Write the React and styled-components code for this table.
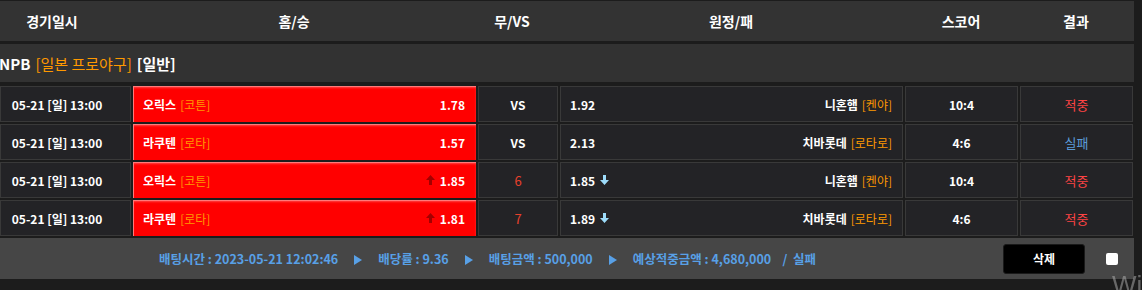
import React from "react";
import styled, { createGlobalStyle } from "styled-components";

const GlobalStyle = createGlobalStyle`
  *, *::before, *::after { box-sizing: border-box; }
  html, body { margin: 0; padding: 0; background: #1c1c1c; overflow: hidden; }
  body { font-family: "Noto Sans CJK KR", "Noto Sans", sans-serif; color: #fff; }
`;

const Page = styled.div`
  width: 1134px;
  padding-top: 1px;
  display: flex;
  flex-direction: column;
`;

const HeaderBar = styled.div`
  height: 40px;
  background: #333333;
  display: grid;
  grid-template-columns: 104px 380px 56px 382px 78px 1fr;
  margin-bottom: 3px;
`;

const HeadCell = styled.div`
  display: flex;
  align-items: center;
  justify-content: center;
  font-size: 14px;
  font-weight: 700;
  color: #fff;
  padding-left: ${(p) => p.$shift || 0}px;
`;

const LeagueBar = styled.div`
  height: 38px;
  background: #323232;
  display: flex;
  align-items: center;
  gap: 5px;
  font-size: 15px;
  font-weight: 700;
  margin-bottom: 4px;
  margin-left: -1px;
`;

const Orange = styled.span`
  color: #ff9900;
  font-weight: ${(p) => (p.$light ? 400 : 700)};
`;

const Rows = styled.div`
  display: flex;
  flex-direction: column;
  gap: 2px;
`;

const Row = styled.div`
  display: grid;
  grid-template-columns: 131px 343px 80px 343px 113px 113px;
  column-gap: 2px;
  height: 36px;
`;

const Cell = styled.div`
  background: #232326;
  border: 1px solid #393939;
  display: flex;
  align-items: center;
  justify-content: ${(p) => p.$justify || "center"};
  font-size: 12px;
  font-weight: 700;
  color: #fff;
`;

const DateCell = styled(Cell)`
  padding-right: 17px;
`;

const HomeCell = styled.div`
  background: #ff0000;
  box-shadow: inset 1px 1px 0 #ff7a7a, inset 0 2px 2px rgba(255, 255, 255, 0.25);
  display: flex;
  align-items: center;
  justify-content: space-between;
  padding: 0 11px 0 10px;
  font-size: 12px;
  font-weight: 700;
`;

const AwayCell = styled(Cell)`
  justify-content: space-between;
  padding: 0 10px 0 9px;
`;

const Team = styled.span`
  display: flex;
  align-items: center;
  gap: 4px;
`;

const Odds = styled.span`
  display: flex;
  align-items: center;
  gap: 5px;
`;

const DrawText = styled.span`
  color: ${(p) => (p.$num ? "#e8412c" : "#fff")};
  font-weight: ${(p) => (p.$num ? 400 : 700)};
  font-size: ${(p) => (p.$num ? 13 : 12)}px;
`;

const ResultText = styled.span`
  color: ${(p) => (p.$win ? "#ff4444" : "#5b9bd8")};
  font-weight: 400;
  font-size: 13px;
`;

const Footer = styled.div`
  margin-top: 2px;
  height: 41px;
  background: #464646;
  display: flex;
  align-items: center;
  padding: 0 16px 0 159px;
`;

const Summary = styled.div`
  display: flex;
  align-items: center;
  font-size: 12.5px;
  font-weight: 700;
  color: #58a0e6;
  white-space: pre;
`;

const Sep = styled.span`
  display: inline-flex;
  margin: 2px 16px 0 16px;
`;

const DeleteButton = styled.button`
  margin-left: auto;
  width: 82px;
  height: 30px;
  background: #000;
  border: 1px solid #1a1a1a;
  border-radius: 3px;
  color: #fff;
  font-family: inherit;
  font-size: 12px;
  font-weight: 700;
  padding: 0;
`;

const Check = styled.span`
  margin-left: 21px;
  width: 12px;
  height: 12px;
  background: #fff;
  border-radius: 2px;
`;

const Watermark = styled.div`
  position: fixed;
  left: 1112px;
  top: 268px;
  font-family: "Liberation Sans", Arial, sans-serif;
  font-size: 26px;
  color: rgba(180, 180, 180, 0.5);
  white-space: nowrap;
  pointer-events: none;
`;

const UpArrow = () => (
  <svg width="9" height="10" viewBox="0 0 9 10">
    <polygon points="4.5,0 9,5 6,5 6,10 3,10 3,5 0,5" fill="#a30000" />
  </svg>
);

const DownArrow = () => (
  <svg width="9" height="10" viewBox="0 0 9 10">
    <polygon points="4.5,10 9,5 6,5 6,0 3,0 3,5 0,5" fill="#9ddcfa" />
  </svg>
);

const Play = () => (
  <svg width="8" height="10" viewBox="0 0 8 10">
    <polygon points="0,0 8,5 0,10" fill="#58a0e6" />
  </svg>
);

const rows = [
  { home: "오릭스", hp: "코튼", ho: "1.78", draw: "VS", ao: "1.92", away: "니혼햄", ap: "켄야", score: "10:4", win: true },
  { home: "라쿠텐", hp: "로타", ho: "1.57", draw: "VS", ao: "2.13", away: "치바롯데", ap: "로타로", score: "4:6", win: false },
  { home: "오릭스", hp: "코튼", ho: "1.85", up: true, draw: "6", ao: "1.85", down: true, away: "니혼햄", ap: "켄야", score: "10:4", win: true },
  { home: "라쿠텐", hp: "로타", ho: "1.81", up: true, draw: "7", ao: "1.89", down: true, away: "치바롯데", ap: "로타로", score: "4:6", win: true },
];

export default function App() {
  return (
    <>
      <GlobalStyle />
      <Page>
        <HeaderBar>
          <HeadCell>경기일시</HeadCell>
          <HeadCell>홈/승</HeadCell>
          <HeadCell>무/VS</HeadCell>
          <HeadCell>원정/패</HeadCell>
          <HeadCell>스코어</HeadCell>
          <HeadCell $shift={18}>결과</HeadCell>
        </HeaderBar>
        <LeagueBar>
          <span>NPB</span>
          <Orange $light>[일본 프로야구]</Orange>
          <span>[일반]</span>
        </LeagueBar>
        <Rows>
          {rows.map((r, i) => (
            <Row key={i}>
              <DateCell>05-21 [일] 13:00</DateCell>
              <HomeCell>
                <Team>
                  {r.home} <Orange $light>[{r.hp}]</Orange>
                </Team>
                <Odds>
                  {r.up && <UpArrow />}
                  {r.ho}
                </Odds>
              </HomeCell>
              <Cell>
                <DrawText $num={r.draw !== "VS"}>{r.draw}</DrawText>
              </Cell>
              <AwayCell>
                <Odds>
                  {r.ao}
                  {r.down && <DownArrow />}
                </Odds>
                <Team>
                  {r.away} <Orange $light>[{r.ap}]</Orange>
                </Team>
              </AwayCell>
              <Cell>{r.score}</Cell>
              <Cell>
                <ResultText $win={r.win}>{r.win ? "적중" : "실패"}</ResultText>
              </Cell>
            </Row>
          ))}
        </Rows>
        <Footer>
          <Summary>
            <span>배팅시간 : 2023-05-21 12:02:46</span>
            <Sep><Play /></Sep>
            <span>배당률 : 9.36</span>
            <Sep><Play /></Sep>
            <span>배팅금액 : 500,000</span>
            <Sep><Play /></Sep>
            <span>예상적중금액 : 4,680,000    /  실패</span>
          </Summary>
          <DeleteButton>삭제</DeleteButton>
          <Check />
        </Footer>
      </Page>
      <Watermark>Windows 정품 인증</Watermark>
    </>
  );
}
